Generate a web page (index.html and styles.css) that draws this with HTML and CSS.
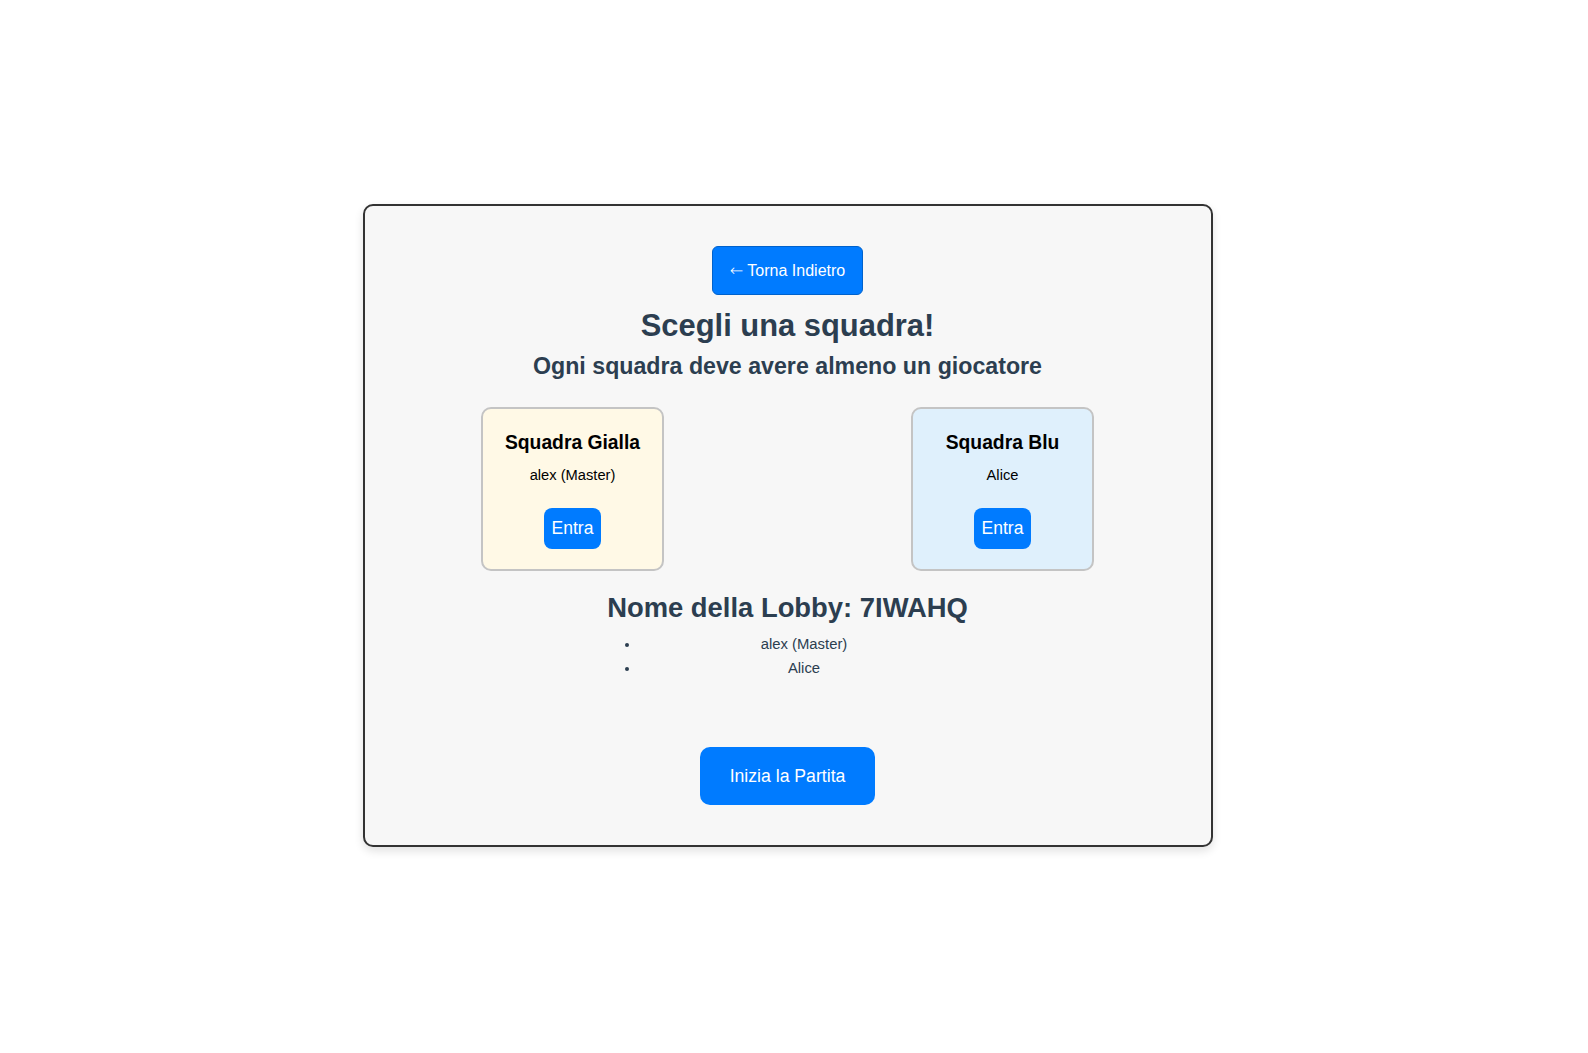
FILE: index.html
```html
<!DOCTYPE html>
<html lang="it">
<head>
<meta charset="utf-8">
<title>Scegli una squadra</title>
<link rel="stylesheet" href="styles.css">
</head>
<body>
<div class="page">
  <div class="lobby-card">
    <button class="back-btn"><span class="arrow">←</span> Torna Indietro</button>
    <h1 class="title">Scegli una squadra!</h1>
    <h2 class="subtitle">Ogni squadra deve avere almeno un giocatore</h2>
    <div class="teams">
      <div class="team team-yellow">
        <h3 class="team-name">Squadra Gialla</h3>
        <p class="team-player">alex (Master)</p>
        <button class="join-btn">Entra</button>
      </div>
      <div class="team team-blue">
        <h3 class="team-name">Squadra Blu</h3>
        <p class="team-player">Alice</p>
        <button class="join-btn">Entra</button>
      </div>
    </div>
    <div class="lobby-info">
      <h2 class="lobby-name">Nome della Lobby: 7IWAHQ</h2>
      <ul class="players">
        <li>alex (Master)</li>
        <li>Alice</li>
      </ul>
    </div>
    <button class="start-btn">Inizia la Partita</button>
  </div>
</div>
</body>
</html>
```
FILE: styles.css
```css
* { box-sizing: border-box; }
html, body { margin: 0; padding: 0; background: #ffffff; }
body {
  font-family: "Liberation Sans", Arial, Helvetica, sans-serif;
  color: #2c3e50;
}
.page {
  min-height: 100vh;
  display: flex;
  justify-content: center;
  align-items: center;
  padding: 0 13px 2px 0;
}
.lobby-card {
  width: 850px;
  background: #f7f7f7;
  border: 2px solid #333333;
  border-radius: 10px;
  box-shadow: 0 4px 10px rgba(0,0,0,0.12);
  padding: 40px 40px 40px;
  display: flex;
  flex-direction: column;
  align-items: center;
  text-align: center;
}
.back-btn {
  font-family: inherit;
  font-size: 16px;
  line-height: 21px;
  height: 49px;
  color: #ffffff;
  background: #007bff;
  border: 1px solid #0062cc;
  border-radius: 6px;
  padding: 0 17px;
  margin: 0;
  cursor: pointer;
}
.arrow {
  font-family: "DejaVu Sans", sans-serif;
  font-size: 16px;
  font-weight: 200;
  line-height: 1;
}
.title {
  font-size: 30.9px;
  line-height: 36px;
  font-weight: bold;
  margin: 12.6px 0 0;
}
.subtitle {
  font-size: 23.2px;
  line-height: 28px;
  font-weight: bold;
  margin: 8px 0 0;
}
.teams {
  display: flex;
  justify-content: center;
  gap: 247px;
  margin-top: 27px;
}
.team {
  width: 183px;
  height: 164px;
  border: 2px solid #c4c4c4;
  border-radius: 10px;
  padding: 22px 10px 19px;
  display: flex;
  flex-direction: column;
  align-items: center;
  color: #000000;
}
.team-yellow { background: #fff9e6; }
.team-blue { background: #dff0fc; }
.team-name {
  font-size: 19.3px;
  line-height: 24px;
  font-weight: bold;
  margin: 0;
}
.team-player {
  font-size: 14.7px;
  line-height: 18px;
  margin: 11px 0 0;
}
.join-btn {
  font-family: inherit;
  font-size: 17.5px;
  line-height: 21px;
  color: #ffffff;
  background: #007bff;
  border: none;
  border-radius: 8px;
  padding: 10px 7.5px;
  margin-top: 24px;
  cursor: pointer;
}
.lobby-info {
  width: fit-content;
  margin-top: 22px;
}
.lobby-name {
  font-size: 27.4px;
  line-height: 30px;
  font-weight: bold;
  margin: 0;
}
.players {
  margin: 9px 0 0;
  padding-left: 33px;
  font-size: 14.85px;
  line-height: 24.3px;
}
.start-btn {
  font-family: inherit;
  font-size: 17.65px;
  line-height: 22px;
  color: #ffffff;
  background: #007bff;
  border: none;
  border-radius: 10px;
  padding: 18px 30px;
  margin-top: 66.4px;
  cursor: pointer;
}
```
